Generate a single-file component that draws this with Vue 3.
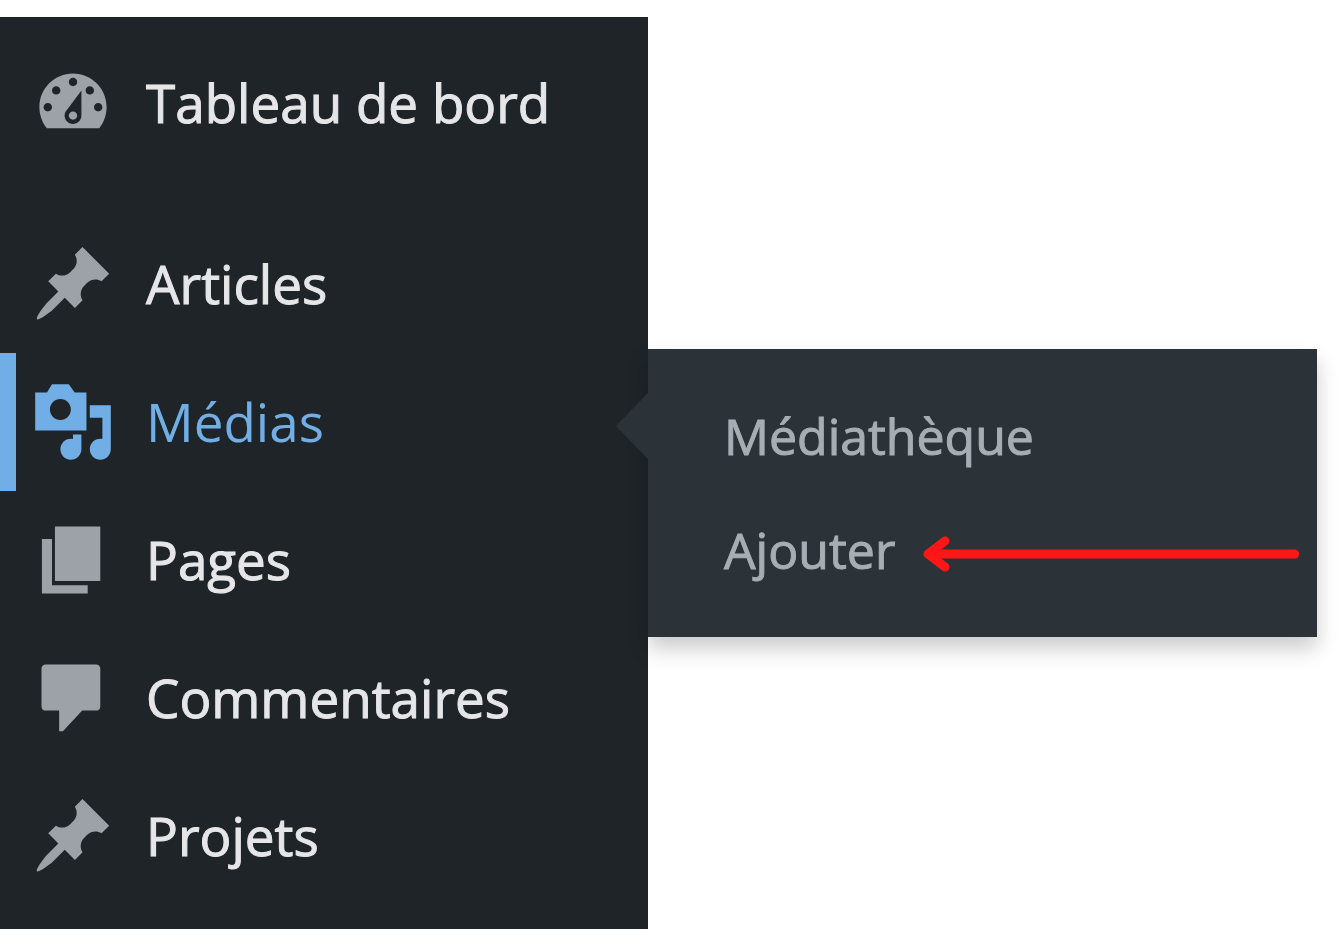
<template>
  <div class="admin">
    <nav class="sidebar" aria-label="Menu principal">
      <ul class="menu">
        <li
          v-for="item in items"
          :key="item.label"
          :class="['menu-item', { active: item.children, separated: item.separated }]"
        >
          <a href="#" class="menu-link">
            <span class="menu-icon">
              <svg viewBox="0 0 20 20" aria-hidden="true">
                <path :d="icons[item.icon]" />
              </svg>
            </span>
            <span>{{ item.label }}</span>
          </a>

          <ul v-if="item.children" class="submenu">
            <li v-for="child in item.children" :key="child.label" class="submenu-item">
              <a href="#" class="submenu-link">{{ child.label }}</a>
              <svg v-if="child.highlighted" class="pointer" aria-hidden="true">
                <line x1="6" y1="18" x2="100%" y2="18" />
                <polyline points="22,5 5,18 22,31" />
              </svg>
            </li>
          </ul>
        </li>
      </ul>
    </nav>
  </div>
</template>

<script setup>
const icons = {
  dashboard:
    'M3.76 16h12.48c1.1-1.37 1.76-3.11 1.76-5 0-4.42-3.58-8-8-8s-8 3.58-8 8c0 1.89.66 3.63 1.76 5zM10 4c.55 0 1 .45 1 1s-.45 1-1 1-1-.45-1-1 .45-1 1-1zM6 6c.55 0 1 .45 1 1s-.45 1-1 1-1-.45-1-1 .45-1 1-1zm8 0c.55 0 1 .45 1 1s-.45 1-1 1-1-.45-1-1 .45-1 1-1zm-5.37 5.55L12 7v6c0 1.1-.9 2-2 2s-2-.9-2-2c0-.57.24-1.08.63-1.45zM4 10c.55 0 1 .45 1 1s-.45 1-1 1-1-.45-1-1 .45-1 1-1zm12 0c.55 0 1 .45 1 1s-.45 1-1 1-1-.45-1-1 .45-1 1-1zm-5 3c0-.55-.45-1-1-1s-1 .45-1 1 .45 1 1 1 1-.45 1-1z',
  pin:
    'M10.44 3.02l1.82-1.82 6.36 6.35-1.83 1.82c-1.05-.68-2.48-.57-3.41.36l-.75.75c-.92.93-1.04 2.35-.35 3.41l-1.83 1.82-2.41-2.41-2.8 2.79c-.42.42-3.38 2.71-3.8 2.29s1.86-3.39 2.28-3.81l2.79-2.79L4.1 9.36l1.83-1.82c1.05.69 2.48.57 3.4-.36l.75-.75c.93-.92 1.05-2.35.36-3.41z',
  media:
    'M13.2 12H1V3H3.8L5 1H9L10.4 3H13.2zM7 4.5c1.38 0 2.5 1.12 2.5 2.5S8.38 9.5 7 9.5 4.5 8.38 4.5 7 5.62 4.5 7 4.5zM14 6h5v10.5c0 1.38-1.12 2.5-2.5 2.5S14 17.88 14 16.5s1.12-2.5 2.5-2.5c.17 0 .34.02.5.05V9h-3V6zm-4 8.05V13h2v3.5c0 1.38-1.12 2.5-2.5 2.5S7 17.88 7 16.5 8.12 14 9.5 14c.17 0 .34.02.5.05z',
  pages: 'M5.7 15V2h10.8v13H5.7zM5 16h8.5v2H2.6V5H5v11z',
  comment:
    'M3.5 2h12c.6 0 1 .4 1 1v9c0 .6-.4 1-1 1h-3.3l-4.6 4.9H6.7V13H3.5c-.6 0-1-.4-1-1V3c0-.6.4-1 1-1z'
}

const items = [
  { label: 'Tableau de bord', icon: 'dashboard' },
  { label: 'Articles', icon: 'pin', separated: true },
  {
    label: 'Médias',
    icon: 'media',
    children: [{ label: 'Médiathèque' }, { label: 'Ajouter', highlighted: true }]
  },
  { label: 'Pages', icon: 'pages' },
  { label: 'Commentaires', icon: 'comment' },
  { label: 'Projets', icon: 'pin' }
]
</script>

<style>
body {
  background: #fff;
}
</style>

<style scoped>
.admin {
  display: grid;
  grid-template-columns: 162fr 173fr;
  padding-top: 17px;
  font-family: "Open Sans", "Noto Sans", sans-serif;
}

.sidebar {
  padding: 17px 0 24px;
  background: #1f2428;
}

.menu,
.submenu {
  margin: 0;
  list-style: none;
}

.menu {
  padding: 0;
}

.menu-item {
  position: relative;
}

.menu-item.separated {
  margin-top: 43px;
}

.menu-link {
  display: flex;
  align-items: center;
  height: 138px;
  color: #e6e6e8;
  font-size: 53px;
  line-height: 74px;
  white-space: nowrap;
  text-decoration: none;
  -webkit-text-stroke: 1px currentColor;
}

.menu-icon {
  display: flex;
  justify-content: center;
  width: 146px;
  color: #9ca2a7;
}

.menu-icon svg {
  width: 84px;
  height: 84px;
  fill: currentColor;
  fill-rule: evenodd;
}

.active .menu-link {
  color: #72aee6;
  box-shadow: inset 16px 0 0 #72aee6;
  -webkit-text-stroke-width: 0;
}

.active .menu-icon {
  color: #72aee6;
}

/* notch pointing back from the flyout to the active entry */
.active::after {
  content: '';
  position: absolute;
  top: 40px;
  right: 0;
  border: solid transparent;
  border-width: 33px 32px 33px 0;
  border-right-color: #2c3338;
}

.submenu {
  position: absolute;
  top: -4px;
  left: 100%;
  width: calc(100vw - 100% - 23px);
  box-sizing: border-box;
  padding: 30px 0;
  background: #2c3338;
  box-shadow: 0 12px 20px rgba(0, 0, 0, 0.2);
}

.submenu-item {
  display: flex;
  align-items: center;
  gap: 28px;
  height: 114px;
  padding: 0 22px 0 76px;
}

.submenu-link {
  color: #a7adb3;
  font-size: 50px;
  line-height: 68px;
  text-decoration: none;
  -webkit-text-stroke: 1px currentColor;
}

.pointer {
  flex: 1;
  min-width: 0;
  height: 36px;
  margin-top: 8px;
  overflow: visible;
  fill: none;
  stroke: #ff1616;
  stroke-width: 9px;
  stroke-linecap: round;
  stroke-linejoin: round;
}
</style>
